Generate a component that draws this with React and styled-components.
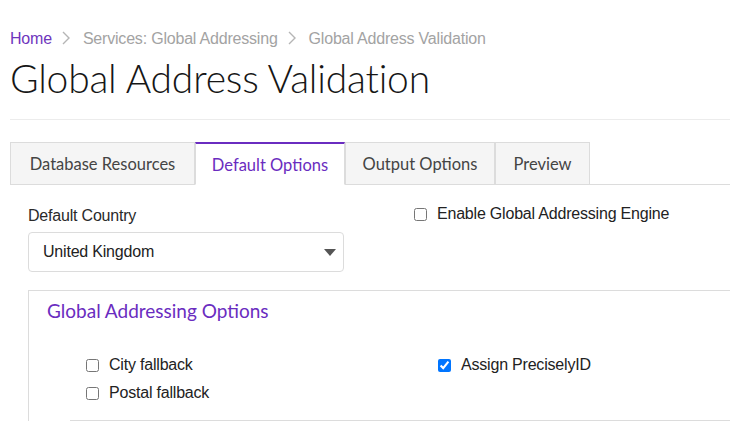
import React from "react";
import styled, { createGlobalStyle } from "styled-components";

const Global = createGlobalStyle`
  html, body { margin: 0; padding: 0; background: #fff; }
  body { font-family: "Liberation Sans", Arial, sans-serif; color: #222; overflow: hidden; }
`;

const Page = styled.div`
  width: 730px;
  height: 421px;
  overflow: hidden;
  padding: 29px 0 0 10px;
  box-sizing: border-box;
`;

const Crumbs = styled.nav`
  display: flex;
  align-items: center;
  height: 20px;
  font-size: 16px;
  line-height: 20px;
  letter-spacing: -0.2px;
`;

const Crumb = styled.span`
  color: ${(p) => (p.$link ? "#6f36bd" : "#a3a3a3")};
  white-space: nowrap;
`;

const Sep = styled.svg`
  width: 8px;
  height: 14px;
  margin: 0 13px 2px 10px;
  flex: none;
`;

const Title = styled.h1`
  margin: 5px 0 0;
  font-family: Lato, sans-serif;
  font-weight: 300;
  font-size: 39px;
  line-height: 48px;
  color: #161616;
  letter-spacing: -0.2px;
`;

const Rule = styled.div`
  height: 1px;
  background: #ececec;
  margin-top: 17px;
`;

const TabBar = styled.div`
  display: flex;
  margin-top: 22px;
  border-bottom: 1px solid #dcdcdc;
  height: 42px;
`;

const Tab = styled.div`
  box-sizing: border-box;
  height: 43px;
  margin-bottom: -1px;
  width: ${(p) => p.$w}px;
  display: flex;
  align-items: center;
  justify-content: center;
  font-family: Lato, sans-serif;
  font-size: 16.5px;
  border: 1px solid #dcdcdc;
  border-top: ${(p) => (p.$active ? "2px solid #6a2cc0" : "1px solid #dcdcdc")};
  border-bottom-color: ${(p) => (p.$active ? "#fff" : "#dcdcdc")};
  background: ${(p) => (p.$active ? "#fff" : "#f5f5f5")};
  color: ${(p) => (p.$active ? "#6a2cc0" : "#444")};
  padding-top: ${(p) => (p.$active ? "2px" : "0")};
`;

const Content = styled.div`
  padding: 22px 0 0 18px;
`;

const TopRow = styled.div`
  display: grid;
  grid-template-columns: 316px 1fr;
  column-gap: 70px;
  align-items: start;
`;

const Field = styled.div`
  display: flex;
  flex-direction: column;
  gap: 7px;
`;

const Label = styled.div`
  font-size: 16px;
  line-height: 18px;
  color: #2a2a2a;
  letter-spacing: -0.2px;
`;

const SelectBox = styled.div`
  box-sizing: border-box;
  height: 40px;
  border: 1px solid #dcdcdc;
  border-radius: 4px;
  display: flex;
  align-items: center;
  justify-content: space-between;
  padding: 0 7px 0 14px;
  font-size: 16px;
  color: #222;
  letter-spacing: -0.2px;
`;

const Check = styled.label`
  display: flex;
  align-items: center;
  gap: 10px;
  font-size: 16px;
  line-height: 22px;
  color: #222;
  letter-spacing: -0.2px;
  white-space: nowrap;
  input {
    margin: 0;
    width: 13px;
    height: 13px;
    flex: none;
  }
`;

const TopCheck = styled(Check)`
  margin-top: -4px;
`;

const Panel = styled.section`
  margin-top: 18px;
  border-top: 1px solid #dcdcdc;
  border-left: 1px solid #dcdcdc;
  padding-top: 9px;
`;

const PanelTitle = styled.h2`
  margin: 0 0 0 18px;
  font-family: Lato, sans-serif;
  font-weight: 400;
  font-size: 19px;
  line-height: 22px;
  color: #6a2cc0;
`;

const Options = styled.div`
  display: grid;
  grid-template-columns: 352px 1fr;
  row-gap: 6px;
  margin: 32px 0 0 57px;
`;

const PanelRule = styled.div`
  height: 1px;
  background: #dcdcdc;
  margin: 16px 0 0 41px;
`;

const Chevron = () => (
  <Sep viewBox="0 0 8 14">
    <path d="M1 1 L7 7 L1 13" fill="none" stroke="#b5b5b5" strokeWidth="1.4" />
  </Sep>
);

const tabs = [
  { label: "Database Resources", w: 185 },
  { label: "Default Options", w: 150, active: true },
  { label: "Output Options", w: 150 },
  { label: "Preview", w: 95 },
];

export default function App() {
  return (
    <>
      <Global />
      <Page>
        <Crumbs>
          <Crumb $link>Home</Crumb>
          <Chevron />
          <Crumb>Services: Global Addressing</Crumb>
          <Chevron />
          <Crumb>Global Address Validation</Crumb>
        </Crumbs>
        <Title>Global Address Validation</Title>
        <Rule />
        <TabBar>
          {tabs.map((t) => (
            <Tab key={t.label} $w={t.w} $active={t.active}>
              {t.label}
            </Tab>
          ))}
        </TabBar>
        <Content>
          <TopRow>
            <Field>
              <Label>Default Country</Label>
              <SelectBox>
                <span>United Kingdom</span>
                <svg width="12" height="7" viewBox="0 0 12 7">
                  <path d="M0 0 H12 L6 7 Z" fill="#555" />
                </svg>
              </SelectBox>
            </Field>
            <TopCheck>
              <input type="checkbox" />
              Enable Global Addressing Engine
            </TopCheck>
          </TopRow>
          <Panel>
            <PanelTitle>Global Addressing Options</PanelTitle>
            <Options>
              <Check>
                <input type="checkbox" />
                City fallback
              </Check>
              <Check>
                <input type="checkbox" defaultChecked />
                Assign PreciselyID
              </Check>
              <Check>
                <input type="checkbox" />
                Postal fallback
              </Check>
            </Options>
            <PanelRule />
          </Panel>
        </Content>
      </Page>
    </>
  );
}
